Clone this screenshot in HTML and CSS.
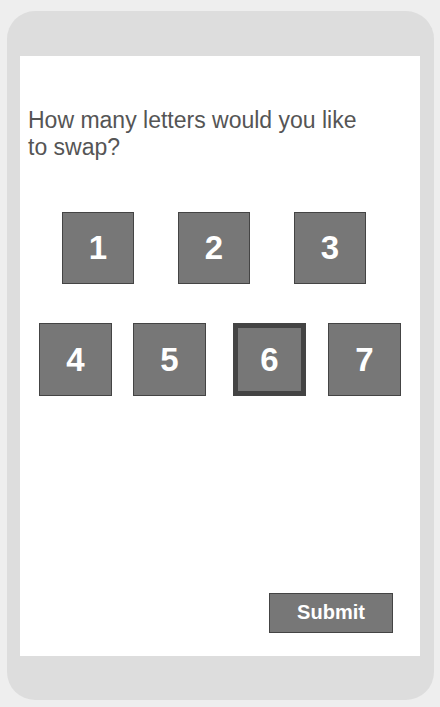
FILE: index.html
```html
<!DOCTYPE html>
<html>
<head>
<meta charset="utf-8">
<link rel="stylesheet" href="styles.css">
</head>
<body>
<div class="phone">
  <div class="screen">
    <p class="question">How many letters would you like to swap?</p>
    <div class="row row-top">
      <div class="num">1</div>
      <div class="num">2</div>
      <div class="num">3</div>
    </div>
    <div class="row row-bottom">
      <div class="num">4</div>
      <div class="num">5</div>
      <div class="num selected">6</div>
      <div class="num">7</div>
    </div>
    <div class="actions">
      <button class="submit">Submit</button>
    </div>
  </div>
</div>
</body>
</html>
```
FILE: styles.css
```css
html, body {
  margin: 0;
  padding: 0;
  background: #eeeeee;
  font-family: "Liberation Sans", Arial, sans-serif;
}
.phone {
  box-sizing: border-box;
  margin: 11px 0 0 7px;
  width: 427px;
  height: 689px;
  background: #dddddd;
  border-radius: 28px;
  padding: 45px 14px 44px 13px;
}
.screen {
  box-sizing: border-box;
  width: 400px;
  height: 600px;
  background: #ffffff;
  padding-top: 51px;
  display: flex;
  flex-direction: column;
}
.question {
  margin: 0 0 0 8px;
  width: 340px;
  font-size: 23px;
  line-height: 27px;
  color: #555555;
}
.row {
  display: flex;
}
.row-top {
  margin-top: 51px;
  padding-left: 42px;
  gap: 44px;
}
.row-bottom {
  margin-top: 39px;
  padding-left: 19px;
  gap: 21px;
}
.num {
  box-sizing: border-box;
  width: 72px;
  height: 72px;
  background: #777777;
  border: 1px solid #444444;
  color: #ffffff;
  font-weight: bold;
  font-size: 33px;
  display: flex;
  align-items: center;
  justify-content: center;
}
.row-bottom .num {
  width: 73px;
  height: 73px;
}
.num.selected {
  border: 5px solid #444444;
  margin: 0 1px 0 6px;
}
.actions {
  margin-top: auto;
  margin-bottom: 23px;
  display: flex;
  padding-left: 249px;
}
.submit {
  box-sizing: border-box;
  width: 124px;
  height: 40px;
  background: #777777;
  border: 1px solid #444444;
  color: #ffffff;
  font-family: "Liberation Sans", Arial, sans-serif;
  font-weight: bold;
  font-size: 20px;
  line-height: 36px;
  padding: 0 0 2px;
  border-radius: 0;
}
```
